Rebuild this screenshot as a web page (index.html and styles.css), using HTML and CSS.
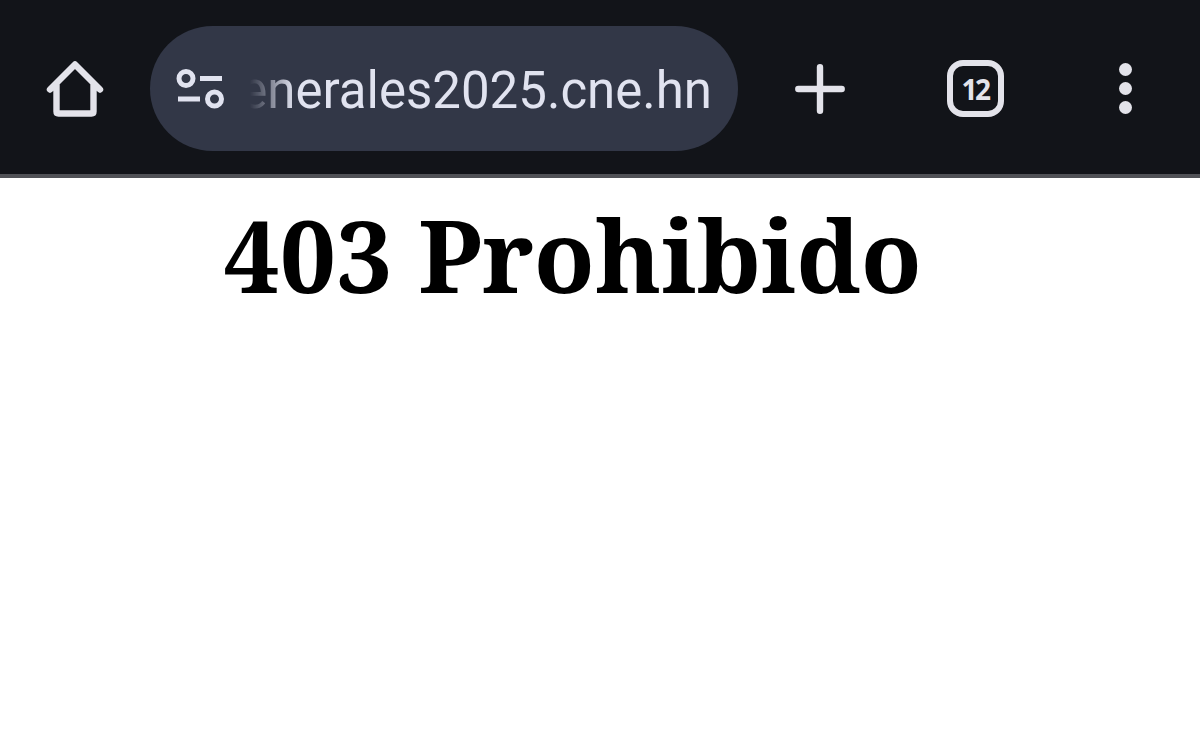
FILE: index.html
```html
<!DOCTYPE html>
<html lang="es">
<head>
<meta charset="utf-8">
<title>403 Prohibido</title>
<link rel="stylesheet" href="styles.css">
</head>
<body>
<header class="toolbar">
  <svg class="home" viewBox="0 0 60 60"><path d="M5 31.500 30 6.500 55 31.500M11.500 27V53.500Q11.500 55.500 13.500 55.500H46.500Q48.500 55.500 48.500 53.500V27" /></svg>
  <div class="address">
    <svg class="tune" viewBox="0 0 50 42"><circle cx="10" cy="10.500" r="7"/><path d="M24 10.500H46M2 31H24"/><circle cx="38.500" cy="31" r="7"/></svg>
    <div class="url-clip"><span class="url">enerales2025.cne.hn</span></div>
  </div>
  <svg class="plus" viewBox="0 0 50 50"><path d="M3.300 25H46.700M25 3.300V46.700"/></svg>
  <div class="tabs">12</div>
  <div class="menu"><i class="dot"></i><i class="dot"></i><i class="dot"></i></div>
</header>
<main class="page"><h1 class="title">403 Prohibido</h1></main>
</body>
</html>
```
FILE: styles.css
```css
* { box-sizing: border-box; }
body { margin: 0; background: #fff; }
.toolbar {
  display: flex;
  align-items: center;
  height: 178px;
  padding: 0 0 0 45px;
  background: #121419;
  border-bottom: 4px solid #505156;
}
.toolbar svg { flex: none; fill: none; stroke: #e3e3ea; stroke-width: 6.4; }
.home { width: 60px; height: 60px; margin-top: 2px; stroke-linecap: round; stroke-linejoin: round; }
.address {
  display: flex;
  align-items: center;
  flex: none;
  width: 588px;
  height: 125px;
  margin: 3px 0 0 45px;
  padding-left: 26px;
  border-radius: 63px;
  background: #323747;
}
.address .tune { width: 50px; height: 42px; stroke: #e1e3f0; stroke-width: 5; }
.url-clip {
  display: flex;
  justify-content: flex-end;
  width: 468px;
  margin-left: 18px;
  padding-top: 4px;
  -webkit-mask-image: linear-gradient(90deg, transparent 6px, #0006 24px, #000 50px);
  mask-image: linear-gradient(90deg, transparent 6px, #0006 24px, #000 50px);
}
.url {
  font: 400 51px/64px Roboto, "Liberation Sans", sans-serif;
  color: #e1e3f0;
  white-space: nowrap;
}
.plus { width: 50px; height: 50px; margin: 3px 0 0 57px; stroke-linecap: round; }
.tabs {
  display: flex;
  align-items: center;
  justify-content: center;
  flex: none;
  width: 57px;
  height: 57px;
  margin: 3px 0 0 102px;
  border: 6.5px solid #e3e3ea;
  border-radius: 16px;
  font: 700 28px/1 "Open Sans", sans-serif;
  letter-spacing: -2.5px;
  padding-right: 1px;
  color: #e3e3ea;
}
.menu { display: flex; flex-direction: column; gap: 6px; margin: 3px 0 0 115px; }
.dot { width: 13px; height: 13px; border-radius: 50%; background: #e3e3ea; }
.page { padding: 14px 0 0 223.5px; }
.title {
  margin: 0;
  width: max-content;
  font: 700 99.6px/126px "Noto Serif", "DejaVu Serif", serif;
  color: #000;
  white-space: nowrap;
}
```
